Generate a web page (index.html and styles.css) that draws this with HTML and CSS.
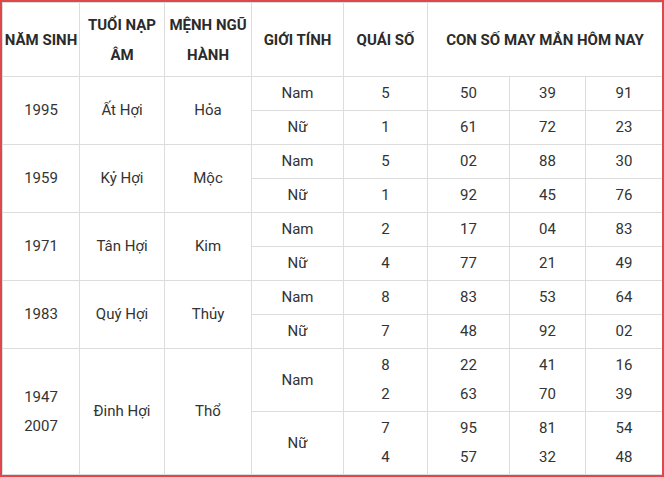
FILE: index.html
```html
<!DOCTYPE html>
<html lang="vi">
<head>
<meta charset="utf-8">
<title>Con số may mắn</title>
<link rel="stylesheet" href="styles.css">
</head>
<body>
<div class="frame">
<table class="lucky">
  <colgroup>
    <col class="c1"><col class="c2"><col class="c3"><col class="c4"><col class="c5"><col class="c6"><col class="c7"><col class="c8">
  </colgroup>
  <thead>
    <tr>
      <th class="nowrap">NĂM SINH</th>
      <th>TUỔI NẠP ÂM</th>
      <th>MỆNH NGŨ HÀNH</th>
      <th>GIỚI TÍNH</th>
      <th>QUÁI SỐ</th>
      <th colspan="3">CON SỐ MAY MẮN HÔM NAY</th>
    </tr>
  </thead>
  <tbody>
    <tr><td rowspan="2">1995</td><td rowspan="2">Ất Hợi</td><td rowspan="2">Hỏa</td><td>Nam</td><td>5</td><td>50</td><td>39</td><td>91</td></tr>
    <tr><td>Nữ</td><td>1</td><td>61</td><td>72</td><td>23</td></tr>
    <tr><td rowspan="2">1959</td><td rowspan="2">Kỷ Hợi</td><td rowspan="2">Mộc</td><td>Nam</td><td>5</td><td>02</td><td>88</td><td>30</td></tr>
    <tr><td>Nữ</td><td>1</td><td>92</td><td>45</td><td>76</td></tr>
    <tr><td rowspan="2">1971</td><td rowspan="2">Tân Hợi</td><td rowspan="2">Kim</td><td>Nam</td><td>2</td><td>17</td><td>04</td><td>83</td></tr>
    <tr><td>Nữ</td><td>4</td><td>77</td><td>21</td><td>49</td></tr>
    <tr><td rowspan="2">1983</td><td rowspan="2">Quý Hợi</td><td rowspan="2">Thủy</td><td>Nam</td><td>8</td><td>83</td><td>53</td><td>64</td></tr>
    <tr><td>Nữ</td><td>7</td><td>48</td><td>92</td><td>02</td></tr>
    <tr><td rowspan="2">1947<br>2007</td><td rowspan="2">Đinh Hợi</td><td rowspan="2">Thổ</td><td>Nam</td><td>8<br>2</td><td>22<br>63</td><td>41<br>70</td><td>16<br>39</td></tr>
    <tr><td>Nữ</td><td>7<br>4</td><td>95<br>57</td><td>81<br>32</td><td>54<br>48</td></tr>
  </tbody>
</table>
</div>
</body>
</html>
```
FILE: styles.css
```css
html, body {
  margin: 0;
  padding: 0;
  background: #fff;
}
.frame {
  box-sizing: border-box;
  width: 664px;
  height: 477px;
  border: 2px solid #e0474c;
  overflow: hidden;
}
.lucky {
  table-layout: fixed;
  border-collapse: collapse;
  width: 660px;
  font-family: Roboto, "Liberation Sans", sans-serif;
  font-size: 15px;
  color: #333;
}
.c1 { width: 77px; }
.c2 { width: 85px; }
.c3 { width: 87px; }
.c4 { width: 92px; }
.c5 { width: 84px; }
.c6 { width: 82px; }
.c7 { width: 76px; }
.c8 { width: 77px; }
.lucky th, .lucky td {
  border: 1px solid #dcdcdc;
  text-align: center;
  vertical-align: middle;
}
.lucky th {
  font-weight: 700;
  color: #2b2b2b;
  line-height: 30px;
  padding: 7px 0 6px;
}
.lucky th.nowrap {
  white-space: nowrap;
}
.lucky td {
  line-height: 29px;
  padding: 2px 2px;
}
```
